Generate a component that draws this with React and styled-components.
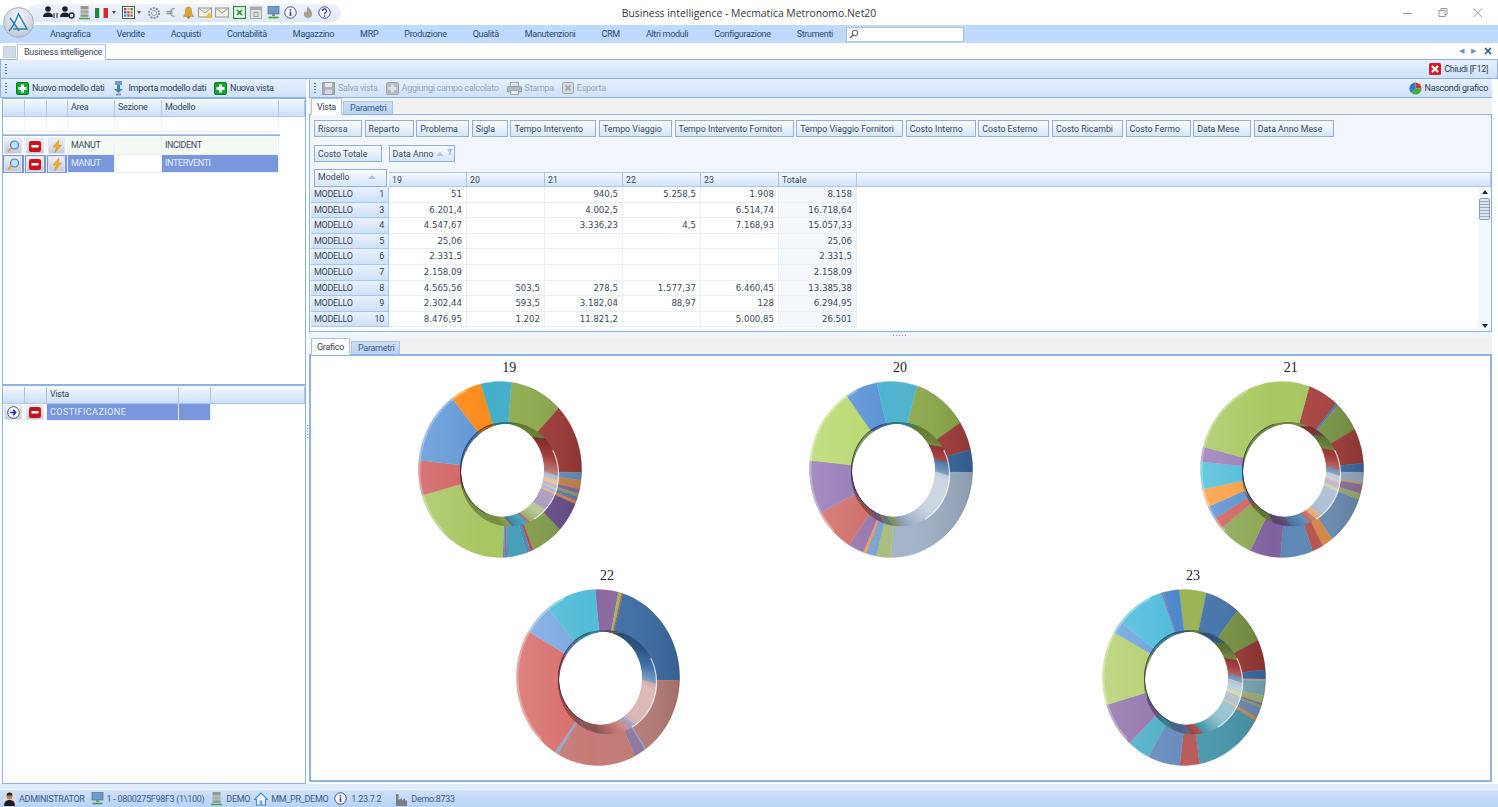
import React from "react";
import styled, { createGlobalStyle } from "styled-components";

const GlobalStyle = createGlobalStyle`
	html, body {
		margin: 0;
		height: 100%;
		overflow: hidden;
		background: #fff;
		font-family: Roboto, "Liberation Sans", Arial, sans-serif;
		font-size: 9px;
		letter-spacing: -0.3px;
		color: #2d3c50;
	}
	* { box-sizing: border-box; }
`;

const Page = styled.div`
	width: 1498px;
	height: 807px;
	display: flex;
	flex-direction: column;
	position: relative;
	overflow: hidden;
`;

/* title bar */
const TitleBar = styled.div`
	height: 25px;
	display: grid;
	grid-template-columns: 1fr auto 1fr;
	align-items: center;
`;
const QuickBar = styled.div`
	justify-self: start;
	margin: 0 0 0 28px;
	height: 18px;
	width: 313px;
	border-radius: 9px;
	background: linear-gradient(#eef3fb, #dfe8f6);
	display: flex;
	align-items: center;
	padding-left: 14px;
`;
const QuickSlot = styled.span`
	width: ${p => p.$w || 17.1}px;
	height: 14px;
	display: flex;
	align-items: center;
	justify-content: center;
	flex: none;
`;
const DropArrow = styled.span`
	width: 0;
	height: 0;
	margin: 0 5px 0 2px;
	border: 2px solid transparent;
	border-top: 3px solid #44546c;
	border-bottom: 0;
	flex: none;
`;
const Title = styled.div`
	font-family: "Open Sans", sans-serif;
	font-size: 10.4px;
	letter-spacing: 0;
	color: #3a3a3a;
`;
const WindowControls = styled.div`
	justify-self: end;
	display: flex;
	gap: 23px;
	padding-right: 14px;
`;
const LogoBall = styled.div`
	position: absolute;
	left: 3px;
	top: 7px;
	width: 31px;
	height: 31px;
	border-radius: 50%;
	background: radial-gradient(circle at 50% 30%, #f6f8fb, #c6ccd6 75%, #9aa3b2);
	border: 1px solid #aab3c4;
	display: flex;
	align-items: center;
	justify-content: center;
`;

/* menu */
const MenuBar = styled.div`
	height: 18px;
	background: #bfdafe;
	display: flex;
	align-items: center;
	gap: 26px;
	padding-left: 50px;
`;
const MenuItem = styled.span`
	color: #2c4a78;
`;
const SearchBox = styled.div`
	width: 118px;
	height: 15px;
	margin-left: -13px;
	background: #fff;
	border: 1px solid #a9bfdc;
	display: flex;
	align-items: center;
	padding-left: 2px;
`;

/* document tab strip */
const DocStrip = styled.div`
	height: 17px;
	display: flex;
	align-items: flex-end;
	padding-left: 3px;
	border-bottom: 1px solid #8db2e3;
`;
const DocStub = styled.div`
	width: 13px;
	height: 12px;
	margin-bottom: 1px;
	background: #d3dbe7;
	border: 1px solid #c4cedd;
`;
const DocTab = styled.div`
	width: 89px;
	height: 16px;
	margin-left: 1px;
	margin-bottom: -1px;
	border: 1px solid #a9c4e8;
	border-bottom: 1px solid #fff;
	background: #fff;
	padding: 2px 0 0 6px;
	color: #3a4a5c;
	white-space: nowrap;
`;
const DocNav = styled.div`
	margin-left: auto;
	display: flex;
	gap: 8px;
	align-items: center;
	height: 100%;
	padding-right: 6px;
	color: #6f8fb8;
	font-size: 7px;
`;

/* toolbars */
const Toolbar = styled.div`
	height: 19px;
	flex: none;
	background: linear-gradient(#e6f0fe, #cfe1fb);
	border: 1px solid #8db2e3;
	border-width: ${p => p.$borders || "0 0 1px 0"};
	display: flex;
	align-items: center;
	gap: 8px;
	padding: 0 ${p => p.$pr || 6}px 0 4px;
`;
const Grip = styled.span`
	width: 2px;
	height: 11px;
	margin-right: ${p => p.$mr || 0}px;
	flex: none;
	background: repeating-linear-gradient(#4b7fc4 0 1px, transparent 1px 3px);
`;
const ToolItem = styled.span`
	display: flex;
	align-items: center;
	gap: 3px;
	white-space: nowrap;
	color: ${p => (p.$off ? "#9aa6b6" : "#33435a")};
`;
const PushRight = styled.span`
	margin-left: auto;
`;

/* layout */
const Main = styled.div`
	flex: 1;
	display: flex;
	min-height: 0;
`;
const LeftPane = styled.div`
	width: 306px;
	flex: none;
	display: flex;
	flex-direction: column;
`;
const Splitter = styled.div`
	width: 3px;
	flex: none;
	display: flex;
	align-items: center;
	justify-content: center;
	background: #fff;
`;
const SplitterDots = styled.span`
	width: 1px;
	height: 13px;
	background: repeating-linear-gradient(#6d93c6 0 1px, transparent 1px 3px);
`;
const RightPane = styled.div`
	flex: 1;
	min-width: 0;
	display: flex;
	flex-direction: column;
	padding-right: 6px;
`;
const GridPanel = styled.div`
	flex: ${p => p.$flex || "none"};
	height: ${p => (p.$h ? `${p.$h}px` : "auto")};
	border: 1px solid #8db2e3;
	margin-left: 2px;
	padding-top: 1px;
	display: flex;
	flex-direction: column;
	background: #fff;
`;
const Row = styled.div`
	display: flex;
	height: ${p => p.$h}px;
	flex: none;
`;
const HeadCell = styled.div`
	width: ${p => p.$w}px;
	flex: ${p => (p.$grow ? 1 : "none")};
	border: 1px solid #a9c7ee;
	border-width: 0 1px 1px 0;
	background: linear-gradient(#f4f8ff, #cadffb);
	padding: 2px 0 0 3px;
	color: #3a4a5c;
`;
const BodyCell = styled.div`
	width: ${p => p.$w}px;
	flex: none;
	border-right: 1px solid ${p => (p.$light ? "#f1f5fb" : "#e6effa")};
	border-bottom: 1px solid #e6effa;
	background: ${p => p.$bg || "transparent"};
	color: ${p => p.$fg || "#3a4a5c"};
	padding: 3px 0 0 3px;
	white-space: nowrap;
	letter-spacing: ${p => p.$ls ?? -0.4}px;
`;
const ButtonCell = styled.div`
	width: ${p => p.$w}px;
	flex: none;
	padding: 1px 2px 1px 1px;
	border-right: 1px solid #e6effa;
	background: ${p => p.$bg || "transparent"};
`;
const GridButton = styled.div`
	height: 100%;
	display: flex;
	align-items: center;
	justify-content: center;
	background: linear-gradient(#eef1f6, #c4cad6);
	border: 1px solid #dfe4ec;
`;
const FixedRule = styled.div`
	height: 2px;
	width: 277px;
	margin-top: 2px;
	background: #b4cdec;
	border-bottom: 1px solid #8db2e3;
	flex: none;
`;

/* tabs */
const TabStrip = styled.div`
	height: 17px;
	flex: none;
	display: flex;
	align-items: flex-end;
	padding-left: 2px;
	background: #f1f1f1;
	border-bottom: 1px solid #8db2e3;
`;
const PaneTab = styled.div`
	width: ${p => p.$w}px;
	height: ${p => (p.$on ? 17 : 14)}px;
	margin: 0 1px -1px 0;
	border: 1px solid #a9c4e8;
	background: ${p => (p.$on ? "#fff" : "linear-gradient(#cfe0f8, #b9d2f4)")};
	border-bottom-color: ${p => (p.$on ? "#fff" : "#8db2e3")};
	padding: ${p => (p.$on ? "3px 0 0 5px" : "1px 0 0 6px")};
	color: ${p => (p.$on ? "#33435a" : "#3b5f92")};
	white-space: nowrap;
`;

/* pivot */
const PivotFrame = styled.div`
	height: 217px;
	flex: none;
	border: 1px solid #8db2e3;
	border-top: 0;
	display: flex;
	flex-direction: column;
	padding: 5px 0 0 1px;
	background: #f3f7fd;
	min-width: 0;
`;
const ChipRow = styled.div`
	display: flex;
	gap: 2.6px;
	height: 17px;
	padding-left: 3px;
	flex: none;
	margin-bottom: ${p => p.$mb || 0}px;
`;
const Chip = styled.div`
	width: ${p => p.$w}px;
	margin-right: ${p => p.$mr || 0}px;
	height: 100%;
	flex: none;
	border: 1px solid #8fb0da;
	background: linear-gradient(#fafcff, #d6e5fa);
	padding: 3px 0 0 3px;
	color: #3a4a5c;
	white-space: nowrap;
	display: flex;
	gap: 3px;
	font-size: 8.8px;
	letter-spacing: 0;
`;
const SortUp = styled.span`
	width: 0;
	height: 0;
	margin-top: 3px;
	border: 4.5px solid transparent;
	border-bottom: 4px solid #a6c6ee;
	border-top: 0;
`;
const PivotTop = styled.div`
	display: flex;
	align-items: flex-end;
	height: 18px;
	padding-left: 3px;
	flex: none;
`;
const RowFieldChip = styled(Chip)`
	width: 73px;
	justify-content: space-between;
	padding: 2px 10px 0 3px;
	margin-right: 2px;
`;
const ColHead = styled.div`
	width: ${p => p.$w}px;
	flex: ${p => (p.$grow ? 1 : "none")};
	height: 15px;
	border: 1px solid #a9c7ee;
	border-width: 1px 1px 1px 0;
	background: linear-gradient(#f4f8ff, #d2e3fb);
	padding: 2px 0 0 3px;
	color: #3a4a5c;
	font-size: 8.8px;
	letter-spacing: 0;
`;
const PivotBody = styled.div`
	flex: 1;
	display: flex;
	min-height: 0;
	overflow: hidden;
`;
const PivotRows = styled.div`
	flex: 1;
	background: #fff;
	overflow: hidden;
`;
const PivotRow = styled.div`
	display: flex;
	height: 15.6px;
`;
const RowHead = styled.div`
	width: 78px;
	flex: none;
	display: flex;
	justify-content: space-between;
	padding: 2px 4px 0 3px;
	background: linear-gradient(#e9f1fd, #cfe0fa);
	border: 1px solid #a9c7ee;
	border-width: 0 1px 1px 0;
	color: #3a4a5c;
`;
const DataCell = styled.div`
	width: 78px;
	flex: none;
	text-align: right;
	padding: 2px 4px 0 0;
	border: 1px solid #e8eff9;
	border-width: 0 1px 1px 0;
	background: ${p => (p.$total ? "#f4f8fd" : "#fff")};
	color: #3a4a5c;
	font-family: "DejaVu Sans", sans-serif;
	font-size: 8.6px;
	letter-spacing: 0;
`;
const ScrollTrack = styled.div`
	width: 13px;
	flex: none;
	background: #f4f7fb;
	display: flex;
	flex-direction: column;
	align-items: center;
	padding: 3px 0;
	justify-content: space-between;
`;
const ScrollThumb = styled.div`
	width: 11px;
	height: 22px;
	margin-top: 4px;
	margin-bottom: auto;
	background: repeating-linear-gradient(#dbe4f0 0 2px, #9aabc2 2px 3px);
	border: 1px solid #8d9db5;
	border-radius: 2px;
`;
const ScrollArrow = styled.span`
	width: 0;
	height: 0;
	border: 3.5px solid transparent;
	${p => (p.$down ? "border-top: 4px solid #1d2b3f; border-bottom: 0;" : "border-bottom: 4px solid #1d2b3f; border-top: 0;")}
`;
const HSplit = styled.div`
	height: 6px;
	flex: none;
	display: flex;
	justify-content: center;
	align-items: center;
	background: #eef4fc;
`;
const HSplitDots = styled.span`
	width: 15px;
	height: 1px;
	background: repeating-linear-gradient(90deg, #6d93c6 0 1px, transparent 1px 3px);
`;

/* charts */
const ChartFrame = styled.div`
	flex: 1;
	margin-bottom: 2px;
	border: 2px solid #8db2e3;
	border-top-width: 1px;
	padding: 3px 0 0 3px;
	background: #fff;
	display: flex;
	flex-direction: column;
	min-height: 0;
`;
const ChartRow = styled.div`
	display: flex;
	width: 1172px;
	height: 208px;
	flex: none;
`;
const ChartCell = styled.div`
	flex: 1;
	display: flex;
	flex-direction: column;
	align-items: center;
`;
const ChartTitle = styled.div`
	font-family: "Liberation Serif", serif;
	font-size: 14px;
	letter-spacing: 0;
	line-height: 17px;
	height: 15px;
	color: #222;
`;

/* status bar */
const StatusBar = styled.div`
	height: 18px;
	margin-top: auto;
	flex: none;
	background: linear-gradient(#cfe1fa, #b8d3f7);
	border-top: 1px solid #e8f0fc;
	display: flex;
	align-items: center;
	padding-left: 3px;
`;
const StatusItem = styled.span`
	display: flex;
	align-items: center;
	gap: ${p => p.$gap || 3}px;
	margin-right: ${p => p.$mr || 6}px;
	color: #3b5a88;
	white-space: nowrap;
`;
const BottomGap = styled.div`
	height: 5px;
	flex: none;
	background: #dfeafa;
`;

/* icons */
const PlusSquare = ({ gray }) => (
	<svg width="13" height="13" viewBox="0 0 13 13">
		<rect x=".5" y=".5" width="12" height="12" rx="1.5" fill={gray ? "#b7bcc4" : "#12a82e"} stroke={gray ? "#a3a8b0" : "#0b7a20"} />
		<path d="M5 2.500h3V5h2.500v3H8v2.500H5V8H2.500V5H5z" fill={gray ? "#dde0e5" : "#fff"} />
	</svg>
);
const ImportPin = () => (
	<svg width="13" height="15" viewBox="0 0 13 15">
		<rect x="3" y="0" width="7" height="4" fill="#6f9ccc" />
		<path d="M5 4h3v4h3l-4.500 4L2 8h3z" fill="#3d86c6" />
		<rect x="4" y="12.500" width="5" height="2" fill="#8a9aac" />
	</svg>
);
const SaveIcon = () => (
	<svg width="13" height="13" viewBox="0 0 13 13">
		<rect x=".5" y=".5" width="12" height="12" fill="#a9aeb6" stroke="#979ca4" />
		<rect x="3" y="1" width="7" height="4" fill="#e4e6ea" />
		<rect x="3" y="7.500" width="7" height="4.500" fill="#d2d5da" />
	</svg>
);
const PrintIcon = () => (
	<svg width="15" height="13" viewBox="0 0 15 13">
		<rect x="3.500" y=".5" width="8" height="4" fill="#dfe1e5" stroke="#a4a8af" />
		<rect x=".5" y="4.500" width="14" height="5.500" rx="1" fill="#b4b8bf" stroke="#9a9ea6" />
		<rect x="3.500" y="8.500" width="8" height="4" fill="#eceef1" stroke="#a4a8af" />
	</svg>
);
const ExportIcon = () => (
	<svg width="12" height="12" viewBox="0 0 12 12">
		<rect x=".5" y=".5" width="11" height="11" rx="1" fill="#d5d7db" stroke="#a6a9af" />
		<path d="M3.500 3.500l5 5m0-5l-5 5" stroke="#9a9da3" strokeWidth="1.300" />
	</svg>
);
const CloseRed = () => (
	<svg width="12" height="12" viewBox="0 0 12 12">
		<rect width="12" height="12" rx="1.500" fill="#d2202a" />
		<path d="M3 3l6 6m0-6l-6 6" stroke="#fff" strokeWidth="2.200" />
	</svg>
);
const PieIcon = () => (
	<svg width="13" height="13" viewBox="0 0 13 13">
		<path d="M6.500 6.500V.5a6 6 0 0 1 6 6z" fill="#d9342b" />
		<path d="M6.500 6.500h6a6 6 0 0 1-10.500 4z" fill="#3fae3a" />
		<path d="M6.500 6.500l-4.500 4A6 6 0 0 1 6.500.5z" fill="#2f78d0" />
	</svg>
);
const Magnifier = () => (
	<svg width="14" height="13" viewBox="0 0 14 13">
		<circle cx="8.500" cy="5" r="4" fill="#bfe0fb" stroke="#3f7fd0" strokeWidth="1.200" />
		<path d="M5.500 8L2 11.500" stroke="#d8a23c" strokeWidth="2" />
	</svg>
);
const MinusRed = () => (
	<svg width="12" height="11" viewBox="0 0 12 11">
		<rect width="12" height="11" rx="2" fill="#c8121e" />
		<rect x="2.500" y="4" width="7" height="2.500" fill="#fff" />
	</svg>
);
const Bolt = () => (
	<svg width="12" height="13" viewBox="0 0 12 13">
		<path d="M8 0L2 7h3.500L3.500 13 10.500 5H7z" fill="#f0b021" stroke="#c9821a" strokeWidth=".5" />
	</svg>
);
const ArrowCircle = () => (
	<svg width="13" height="13" viewBox="0 0 13 13">
		<circle cx="6.500" cy="6.500" r="5.800" fill="#fff" stroke="#4a4f7a" />
		<path d="M3 6.500h5M6 3.800l2.700 2.700L6 9.200" fill="none" stroke="#1c2fae" strokeWidth="1.500" />
	</svg>
);
const Person = ({ tail }) => (
	<svg width="15" height="13" viewBox="0 0 15 13">
		<circle cx="5" cy="3" r="2.800" fill="#1d2027" />
		<path d="M0 11c0-3 2-4.500 5-4.500S10 8 10 11z" fill="#1d2027" />
		{tail === "arrows" ? (
			<path d="M11 7v5m3-5v5" stroke="#3b4656" strokeWidth="1.200" />
		) : (
			<circle cx="11.500" cy="9.500" r="2.500" fill="none" stroke="#2b3340" strokeWidth="1.500" />
		)}
	</svg>
);
const Server = ({ size = 13 }) => (
	<svg width={size} height={size + 1} viewBox="0 0 13 14">
		<rect x="2.500" y="0" width="8" height="3.500" fill="#8f9a8c" />
		<rect x="2.500" y="4.200" width="8" height="3.500" fill="#a7aea4" />
		<rect x="2.500" y="8.400" width="8" height="2.500" fill="#8f9a8c" />
		<path d="M1 12.500h11" stroke="#4da34a" strokeWidth="1.600" />
	</svg>
);
const FlagIT = () => (
	<svg width="13" height="10" viewBox="0 0 13 10">
		<rect width="4.500" height="10" fill="#1f8a3b" />
		<rect x="4.500" width="4" height="10" fill="#f4f4f4" />
		<rect x="8.500" width="4.500" height="10" fill="#d32a30" />
	</svg>
);
const ColorGrid = () => {
	const cols = ["#d33", "#e9b21c", "#2a9d3c", "#2a62c9", "#a23bc0", "#e67a1d", "#1ca6c9", "#d33", "#2a9d3c"];
	return (
		<svg width="13" height="13" viewBox="0 0 13 13">
			<rect x=".5" y=".5" width="12" height="12" fill="#fff" stroke="#555" />
			{cols.map((c, i) => (
				<rect key={i} x={2 + (i % 3) * 3.200} y={2 + Math.floor(i / 3) * 3.200} width="2.400" height="2.400" fill={c} />
			))}
		</svg>
	);
};
const Gear = () => (
	<svg width="14" height="14" viewBox="0 0 14 14">
		<circle cx="7" cy="7" r="5" fill="none" stroke="#8f949b" strokeWidth="2" strokeDasharray="2 1.100" />
		<circle cx="7" cy="7" r="2.500" fill="none" stroke="#a3a7ae" />
	</svg>
);
const Euro = () => (
	<svg width="12" height="13" viewBox="0 0 12 13">
		<path d="M9.500 2.500a4 4 0 1 0 0 8M1.500 5.500h6M1.500 7.500h6" fill="none" stroke="#9b9d98" strokeWidth="1.400" />
	</svg>
);
const Bell = () => (
	<svg width="13" height="13" viewBox="0 0 13 13">
		<path d="M6.500 1C4 1 3.500 3 3.500 5.500c0 2.500-1.500 3.500-2 5h10c-.5-1.500-2-2.500-2-5C9.500 3 9 1 6.500 1z" fill="#d9a43a" stroke="#a87a22" strokeWidth=".5" />
		<circle cx="6.500" cy="11.500" r="1.300" fill="#a87a22" />
	</svg>
);
const Mail = ({ warn }) => (
	<svg width="15" height="13" viewBox="0 0 15 13">
		<rect x=".5" y="2" width="13" height="9" fill="#f0f0ea" stroke="#9a9c98" />
		<path d="M.5 2l6.500 5 6.500-5" fill="none" stroke="#9a9c98" />
		{warn && <path d="M11 6l3.500 6h-7z" fill="#e8c321" />}
	</svg>
);
const Excel = () => (
	<svg width="13" height="13" viewBox="0 0 13 13">
		<rect x=".5" y=".5" width="12" height="12" fill="#e9f6e9" stroke="#2f8a3b" strokeWidth="1.300" />
		<path d="M4 4l5 5m0-5l-5 5" stroke="#1e8a36" strokeWidth="1.500" />
	</svg>
);
const Calendar = () => (
	<svg width="12" height="13" viewBox="0 0 12 13">
		<rect x=".5" y="1" width="11" height="11.500" fill="#dfe0e0" stroke="#a6a8aa" />
		<rect x=".5" y="1" width="11" height="3" fill="#a9abad" />
		<rect x="4" y="6.500" width="4" height="4" fill="none" stroke="#9a9c9e" />
	</svg>
);
const Monitor = () => (
	<svg width="13" height="13" viewBox="0 0 13 13">
		<rect x="1" y="0" width="11" height="8" fill="#6d9cc9" stroke="#5a6d82" strokeWidth=".7" />
		<rect x="5" y="8" width="3" height="2" fill="#7f8c99" />
		<path d="M1.500 11.500h10" stroke="#4da34a" strokeWidth="1.800" />
	</svg>
);
const Info = () => (
	<svg width="13" height="13" viewBox="0 0 13 13">
		<circle cx="6.500" cy="6.500" r="5.700" fill="#fff" stroke="#3d4a9e" />
		<circle cx="6.500" cy="3.800" r=".9" fill="#2a35b0" />
		<rect x="5.700" y="5.500" width="1.600" height="4.500" fill="#2a35b0" />
	</svg>
);
const Flame = () => (
	<svg width="12" height="13" viewBox="0 0 12 13">
		<path d="M6 0c1 3 4 4 4 8a4 4 0 0 1-8 0c0-1.500.6-2.500 1.300-3.300C3.500 6 4 6.500 4.500 6.500 5 4.500 5 2 6 0z" fill="#a69d92" />
	</svg>
);
const Question = () => (
	<svg width="13" height="13" viewBox="0 0 13 13">
		<circle cx="6.500" cy="6.500" r="5.700" fill="#fff" stroke="#3d4a9e" />
		<path d="M4.500 5a2 2 0 1 1 3 1.700c-.7.400-1 .8-1 1.500" fill="none" stroke="#2a35b0" strokeWidth="1.300" />
		<circle cx="6.500" cy="10" r=".8" fill="#2a35b0" />
	</svg>
);
const UserPhoto = () => (
	<svg width="13" height="14" viewBox="0 0 13 14">
		<rect width="13" height="14" fill="#d8dbe0" />
		<circle cx="6.500" cy="4.500" r="3" fill="#b8845e" />
		<path d="M3.500 3.500a3 3 0 0 1 6 0z" fill="#2b2420" />
		<path d="M1 14c0-4 2-6 5.500-6S12 10 12 14z" fill="#1e1e22" />
	</svg>
);
const House = () => (
	<svg width="14" height="14" viewBox="0 0 14 14">
		<path d="M7 1L.5 7.500h2V13h9V7.500h2z" fill="#eef6fc" stroke="#3a8fce" strokeWidth="1.100" />
		<rect x="5.500" y="8.500" width="3" height="4.500" fill="#7da9cc" />
	</svg>
);
const Factory = () => (
	<svg width="13" height="14" viewBox="0 0 13 14">
		<path d="M1 14V2h2.500v6L7 6v2.500L10 6v2.500h2V14z" fill="#7e7f80" />
	</svg>
);
const Lens = () => (
	<svg width="10" height="10" viewBox="0 0 10 10">
		<circle cx="6" cy="4" r="2.800" fill="none" stroke="#556" />
		<path d="M4 6L1 9" stroke="#556" strokeWidth="1.200" />
	</svg>
);
const Logo = () => (
	<svg width="25" height="25" viewBox="0 0 25 25">
		<path d="M3 21c3-3 6-8 9.500-17L21 19H7M4 8c3 4 6 8 9 13" fill="none" stroke="#2c7fb8" strokeWidth="1.500" />
	</svg>
);
const MinIcon = () => (
	<svg width="12" height="12" viewBox="0 0 12 12"><path d="M1 6.500h9" stroke="#9a9a9a" /></svg>
);
const RestoreIcon = () => (
	<svg width="12" height="12" viewBox="0 0 12 12">
		<rect x="2" y="3.500" width="6" height="6" fill="none" stroke="#9a9a9a" />
		<path d="M4 3.500V1.500h6v6H8" fill="none" stroke="#9a9a9a" />
	</svg>
);
const XIcon = () => (
	<svg width="12" height="12" viewBox="0 0 12 12"><path d="M1.500 1.500l8.500 8.500m0-8.500l-8.500 8.500" stroke="#9a9a9a" /></svg>
);
const FilterMark = () => (
	<svg width="6" height="6" viewBox="0 0 6 6"><path d="M0 0h6L3.700 3v3H2.300V3z" fill="#a8bcd6" /></svg>
);

/* donut drawing */
const rad = a => (a * Math.PI) / 180;
const pt = (e, a) => [e.cx + e.rx * Math.sin(rad(a)), e.cy - e.ry * Math.cos(rad(a))];
const arcPts = (e, a0, a1) => {
	const n = Math.max(1, Math.ceil(Math.abs(a1 - a0) / 3));
	const out = [];
	for (let i = 0; i <= n; i++) out.push(pt(e, a0 + ((a1 - a0) * i) / n));
	return out;
};
const toPath = pts => "M" + pts.map(p => `${p[0].toFixed(2)} ${p[1].toFixed(2)}`).join("L");
const sector = (e1, e2, a0, a1) => toPath([...arcPts(e1, a0, a1), ...arcPts(e2, a1, a0)]) + "Z";

const mix = (hex, t) => {
	const target = t > 0 ? 255 : 0;
	const k = Math.abs(t);
	const n = parseInt(hex.slice(1), 16);
	const c = [n >> 16, (n >> 8) & 255, n & 255].map(v => Math.round(v + (target - v) * k));
	return `rgb(${c.join(",")})`;
};

const wallKeys = [[0, -0.35], [50, -0.25], [75, 0.05], [100, 0.5], [140, 0.45], [165, 0], [190, -0.3], [240, -0.3], [360, -0.35]];
const wallShade = angle => {
	const a = ((angle % 360) + 360) % 360;
	for (let i = 1; i < wallKeys.length; i++) {
		if (a <= wallKeys[i][0]) {
			const [x0, y0] = wallKeys[i - 1];
			const [x1, y1] = wallKeys[i];
			return y0 + ((y1 - y0) * (a - x0)) / (x1 - x0);
		}
	}
	return 0;
};

const Donut = ({ id, start, slices }) => {
	const cx = 91;
	const cy = 95.5;
	const outer = { cx, cy, rx: 81.5, ry: 88 };
	const hole = { cx: cx + 2.5, cy: cy + 0.5, rx: 42, ry: 47 };
	const wall = { cx: cx + 9.5, cy: cy + 5, rx: 49, ry: 51.5 };
	let from = start;
	const ring = [];
	const walls = [];
	slices.forEach(([to, color], i) => {
		ring.push(<path key={i} d={sector(outer, hole, from, to)} fill={color} stroke={color} strokeWidth=".3" />);
		for (let a = from; a < to; a += 2) {
			const b = Math.min(a + 2, to);
			const fill = mix(color, wallShade((a + b) / 2));
			walls.push(<path key={`${i}-${a}`} d={sector(hole, wall, a, b)} fill={fill} stroke={fill} strokeWidth=".5" />);
		}
		from = to;
	});
	return (
		<svg width="200" height="190" viewBox="0 0 200 190">
			<defs>
				<linearGradient id={`sh${id}`} x1="0" x2="1" y1="0" y2="0">
					<stop offset="0" stopColor="#fff" stopOpacity=".16" />
					<stop offset=".45" stopColor="#fff" stopOpacity="0" />
					<stop offset="1" stopColor="#000" stopOpacity=".14" />
				</linearGradient>
			</defs>
			{ring}
			<path d={sector(outer, hole, 0, 360)} fill={`url(#sh${id})`} />
			{walls}
			<path d={toPath(arcPts(wall, 62, 150))} fill="none" stroke="#fff" strokeOpacity=".75" strokeWidth="1.200" />
			<path d={toPath(arcPts({ ...outer, rx: 80.5, ry: 87 }, 225, 335))} fill="none" stroke="#fff" strokeOpacity=".3" strokeWidth="2" />
			<path d={toPath(arcPts(outer, 20, 140))} fill="none" stroke="#000" strokeOpacity=".22" strokeWidth=".8" />
			<path d={toPath(arcPts(hole, 205, 345))} fill="none" stroke="#1c2a44" strokeOpacity=".75" strokeWidth=".9" />
		</svg>
	);
};

const charts = [
	[
		{
			title: "19",
			start: 8,
			slices: [
				[46, "#90ad4f"], [92, "#a33e3c"], [97, "#6f96c4"], [103, "#d08c50"], [106, "#8a6ea5"], [108, "#94a863"],
				[110, "#4f86c0"], [111, "#8a6ea5"], [113, "#e08a3c"], [133, "#6c5190"], [156, "#86a04f"], [158, "#b8484a"],
				[161, "#4f86b8"], [175, "#439fb8"], [177, "#8a6ea5"], [178, "#4f86b8"], [253, "#a7c560"], [276, "#cf5f5f"],
				[324, "#5e96d6"], [346.5, "#fb8a18"], [368, "#44aec9"]
			]
		},
		{
			title: "20",
			start: 18.6,
			slices: [
				[58, "#8fac4c"], [77, "#a63f3d"], [92, "#3a6a9f"], [180, "#a2b4c8"], [190.5, "#a9bd7e"], [198, "#7ea3cc"],
				[200, "#f09a50"], [211, "#9777ad"], [240.5, "#cf6d68"], [276, "#9479b5"], [327, "#b9d86f"], [350, "#5e96d6"],
				[378.6, "#4fb3cf"]
			]
		},
		{
			title: "21",
			start: 19.5,
			slices: [
				[41.5, "#ab4543"], [43, "#3f7fc0"], [63, "#7d9a49"], [86, "#a33e3c"], [92, "#3f6fa8"], [99, "#9fb1c6"],
				[100, "#d99a6a"], [106, "#92799f"], [110, "#a3b073"], [142, "#6f8fb8"], [150, "#d98c48"], [158, "#b9544f"],
				[181, "#5a88b5"], [203, "#80619f"], [228, "#8ba652"], [236, "#d0615f"], [245, "#5a90d0"], [257, "#fb9d40"],
				[275, "#4fbdd8"], [285, "#9a7cb8"], [379.5, "#a9c862"]
			]
		}
	],
	[
		{
			title: "22",
			start: -2,
			slices: [
				[14.5, "#8a689f"], [17, "#9cb75a"], [18, "#c04a4a"], [92, "#3e6fa7"], [144, "#bd807c"], [145, "#7eaad6"],
				[153, "#9279a5"], [210, "#c57a76"], [212, "#7eaad6"], [301.5, "#d76b68"], [322, "#7ba8e0"], [358, "#52bcd8"]
			]
		},
		{
			title: "23",
			start: -3.4,
			slices: [
				[16, "#9ab453"], [41, "#4676ae"], [65, "#7b9645"], [85, "#9e3a38"], [91, "#3c6fa9"], [92, "#e0a0a0"],
				[102, "#82afbd"], [107, "#a9b97a"], [108.5, "#8a6ea5"], [110, "#94a863"], [117, "#6f8fb8"], [119, "#e08a3c"],
				[169, "#4a99ae"], [183, "#b85a58"], [206, "#6a8dbe"], [222, "#4fb0c6"], [252, "#9274ad"], [301, "#b5d070"],
				[309, "#6ea4dd"], [344, "#52bddb"], [345, "#8a6ea5"], [356.6, "#5088cc"]
			]
		}
	]
];

const chips = [
	["Risorsa", 48], ["Reparto", 49], ["Problema", 53], ["Sigla", 36], ["Tempo Intervento", 86], ["Tempo Viaggio", 73],
	["Tempo Intervento Fornitori", 119], ["Tempo Viaggio Fornitori", 107], ["Costo Interno", 70], ["Costo Esterno", 71],
	["Costo Ricambi", 71], ["Costo Fermo", 65], ["Data Mese", 58], ["Data Anno Mese", 80]
];

const pivotRows = [
	[1, "51", "", "940,5", "5.258,5", "1.908", "8.158"],
	[3, "6.201,4", "", "4.002,5", "", "6.514,74", "16.718,64"],
	[4, "4.547,67", "", "3.336,23", "4,5", "7.168,93", "15.057,33"],
	[5, "25,06", "", "", "", "", "25,06"],
	[6, "2.331,5", "", "", "", "", "2.331,5"],
	[7, "2.158,09", "", "", "", "", "2.158,09"],
	[8, "4.565,56", "503,5", "278,5", "1.577,37", "6.460,45", "13.385,38"],
	[9, "2.302,44", "593,5", "3.182,04", "88,97", "128", "6.294,95"],
	[10, "8.476,95", "1.202", "11.821,2", "", "5.000,85", "26.501"]
];

const menu = ["Anagrafica", "Vendite", "Acquisti", "Contabilità", "Magazzino", "MRP", "Produzione", "Qualità", "Manutenzioni", "CRM", "Altri moduli", "Configurazione", "Strumenti"];

const SELECTED = "#7a96dc";

const ModelRow = ({ selected, area, model }) => {
	const bg = selected ? SELECTED : "#f4faf3";
	const fg = selected ? "#e8eefb" : "#3a4a5c";
	return (
		<Row $h={18}>
			<ButtonCell $w={22} $bg={selected ? SELECTED : undefined}><GridButton><Magnifier /></GridButton></ButtonCell>
			<ButtonCell $w={22} $bg={selected ? SELECTED : undefined}><GridButton><MinusRed /></GridButton></ButtonCell>
			<ButtonCell $w={21} $bg={selected ? SELECTED : undefined}><GridButton><Bolt /></GridButton></ButtonCell>
			<BodyCell $w={47} $bg={bg} $fg={fg}>{area}</BodyCell>
			<BodyCell $w={47} $bg={selected ? "#fff" : bg} />
			<BodyCell $w={117} $bg={bg} $fg={fg}>{model}</BodyCell>
		</Row>
	);
};

export default function App() {
	return (
		<Page>
			<GlobalStyle />
			<TitleBar>
				<QuickBar>
					<QuickSlot><Person tail="arrows" /></QuickSlot>
					<QuickSlot><Person /></QuickSlot>
					<QuickSlot><Server /></QuickSlot>
					<QuickSlot><FlagIT /></QuickSlot>
					<DropArrow />
					<QuickSlot $w={14}><ColorGrid /></QuickSlot>
					<DropArrow />
					<QuickSlot $w={16}><Gear /></QuickSlot>
					<QuickSlot><Euro /></QuickSlot>
					<QuickSlot><Bell /></QuickSlot>
					<QuickSlot><Mail warn /></QuickSlot>
					<QuickSlot><Mail /></QuickSlot>
					<QuickSlot><Excel /></QuickSlot>
					<QuickSlot><Calendar /></QuickSlot>
					<QuickSlot><Monitor /></QuickSlot>
					<QuickSlot><Info /></QuickSlot>
					<QuickSlot><Flame /></QuickSlot>
					<QuickSlot><Question /></QuickSlot>
				</QuickBar>
				<Title>Business intelligence - Mecmatica Metronomo.Net20</Title>
				<WindowControls>
					<MinIcon />
					<RestoreIcon />
					<XIcon />
				</WindowControls>
			</TitleBar>
			<LogoBall><Logo /></LogoBall>

			<MenuBar>
				{menu.map(m => <MenuItem key={m}>{m}</MenuItem>)}
				<SearchBox><Lens /></SearchBox>
			</MenuBar>

			<DocStrip>
				<DocStub />
				<DocTab>Business intelligence</DocTab>
				<DocNav>
					<span>◀</span>
					<span>▶</span>
					<svg width="8" height="8" viewBox="0 0 8 8"><path d="M1 1l6 6m0-6L1 7" stroke="#1d4f8f" strokeWidth="1.500" /></svg>
				</DocNav>
			</DocStrip>

			<Toolbar $pr={9} $borders="0 1px 1px 1px">
				<Grip />
				<PushRight />
				<ToolItem><CloseRed /> Chiudi [F12]</ToolItem>
			</Toolbar>

			<Main>
				<LeftPane>
					<Toolbar $borders="0 0 1px 1px">
						<Grip $mr={1} />
						<ToolItem><PlusSquare /> Nuovo modello dati</ToolItem>
						<ToolItem><ImportPin /> Importa modello dati</ToolItem>
						<ToolItem><PlusSquare /> Nuova vista</ToolItem>
					</Toolbar>
					<GridPanel $flex="1">
						<Row $h={17}>
							<HeadCell $w={22} />
							<HeadCell $w={22} />
							<HeadCell $w={21} />
							<HeadCell $w={47}>Area</HeadCell>
							<HeadCell $w={47}>Sezione</HeadCell>
							<HeadCell $w={117}>Modello</HeadCell>
							<HeadCell $grow />
						</Row>
						<Row $h={15}>
							<BodyCell $w={22} $light />
							<BodyCell $w={22} $light />
							<BodyCell $w={21} $light />
							<BodyCell $w={47} $light />
							<BodyCell $w={47} $light />
							<BodyCell $w={117} $light />
						</Row>
						<FixedRule />
						<Row $h={1} />
						<ModelRow area="MANUT" model="INCIDENT" />
						<ModelRow selected area="MANUT" model="INTERVENTI" />
					</GridPanel>
					<GridPanel $h={399}>
						<Row $h={17}>
							<HeadCell $w={22} />
							<HeadCell $w={22} />
							<HeadCell $w={132}>Vista</HeadCell>
							<HeadCell $w={32} />
							<HeadCell $grow />
						</Row>
						<Row $h={17}>
							<ButtonCell $w={22}><GridButton><ArrowCircle /></GridButton></ButtonCell>
							<ButtonCell $w={22}><GridButton><MinusRed /></GridButton></ButtonCell>
							<BodyCell $w={132} $bg={SELECTED} $fg="#e8eefb" $ls={0.45}>COSTIFICAZIONE</BodyCell>
							<BodyCell $w={32} $bg={SELECTED} />
						</Row>
					</GridPanel>
				</LeftPane>
				<Splitter><SplitterDots /></Splitter>
				<RightPane>
					<Toolbar $pr={4} $borders="0 0 1px 1px">
						<Grip $mr={-2} />
						<ToolItem $off><SaveIcon /> Salva vista</ToolItem>
						<ToolItem $off><PlusSquare gray /> Aggiungi campo calcolato</ToolItem>
						<ToolItem $off><PrintIcon /> Stampa</ToolItem>
						<ToolItem $off><ExportIcon /> Esporta</ToolItem>
						<PushRight />
						<ToolItem><PieIcon /> Nascondi grafico</ToolItem>
					</Toolbar>
					<TabStrip>
						<PaneTab $on $w={31}>Vista</PaneTab>
						<PaneTab $w={50}>Parametri</PaneTab>
					</TabStrip>
					<PivotFrame>
						<ChipRow $mb={8}>
							{chips.map(([label, w]) => <Chip key={label} $w={w}>{label}</Chip>)}
						</ChipRow>
						<ChipRow $mb={7}>
							<Chip $w={68} $mr={4}>Costo Totale</Chip>
							<Chip $w={66}>Data Anno <SortUp /><FilterMark /></Chip>
						</ChipRow>
						<PivotTop>
							<RowFieldChip as="div">Modello <SortUp /></RowFieldChip>
							{["19", "20", "21", "22", "23"].map(y => <ColHead key={y} $w={78}>{y}</ColHead>)}
							<ColHead $w={78}>Totale</ColHead>
							<ColHead $grow />
						</PivotTop>
						<PivotBody>
							<PivotRows>
								{pivotRows.map(([n, ...vals]) => (
									<PivotRow key={n}>
										<RowHead><span>MODELLO</span><span>{n}</span></RowHead>
										{vals.map((v, i) => <DataCell key={i} $total={i === 5}>{v}</DataCell>)}
									</PivotRow>
								))}
							</PivotRows>
							<ScrollTrack>
								<ScrollArrow />
								<ScrollThumb />
								<ScrollArrow $down />
							</ScrollTrack>
						</PivotBody>
					</PivotFrame>
					<HSplit><HSplitDots /></HSplit>
					<TabStrip>
						<PaneTab $on $w={39}>Grafico</PaneTab>
						<PaneTab $w={49}>Parametri</PaneTab>
					</TabStrip>
					<ChartFrame>
						{charts.map((row, r) => (
							<ChartRow key={r}>
								{row.map(c => (
									<ChartCell key={c.title}>
										<ChartTitle>{c.title}</ChartTitle>
										<Donut id={c.title} start={c.start} slices={c.slices} />
									</ChartCell>
								))}
							</ChartRow>
						))}
					</ChartFrame>
				</RightPane>
			</Main>
			<BottomGap />
			<StatusBar>
				<StatusItem $mr={6}><UserPhoto /> ADMINISTRATOR</StatusItem>
				<StatusItem $mr={6}><Monitor /> 1 - 0800275F98F3 (1\100)</StatusItem>
				<StatusItem $mr={4}><Server /> DEMO</StatusItem>
				<StatusItem $mr={6}><House /> MM_PR_DEMO</StatusItem>
				<StatusItem $mr={14} $gap={4}><Info /> 1.23.7.2</StatusItem>
				<StatusItem><Factory /> Demo:8733</StatusItem>
			</StatusBar>
		</Page>
	);
}
